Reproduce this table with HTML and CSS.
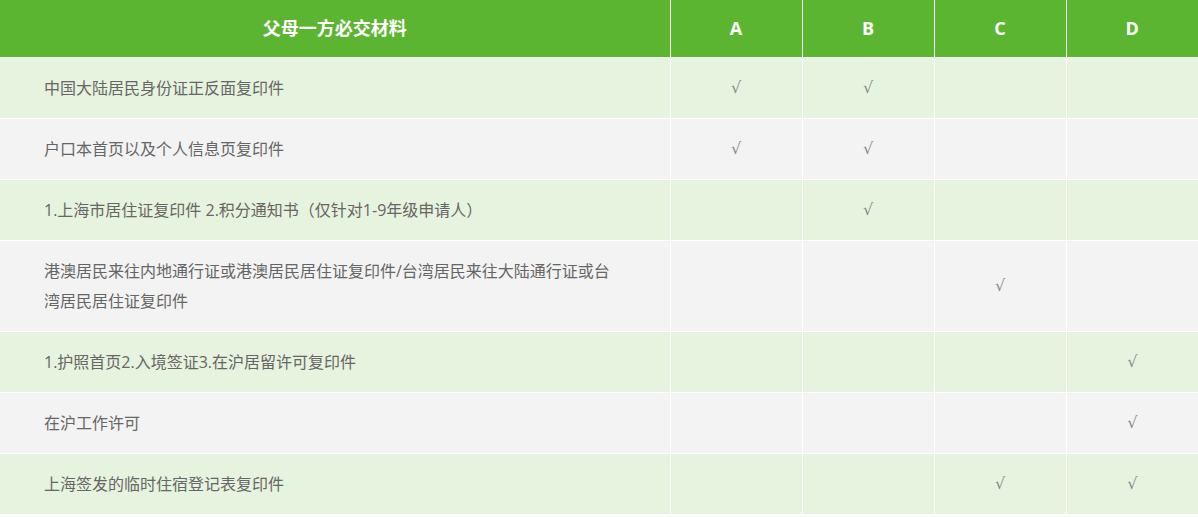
FILE: index.html
```html
<!DOCTYPE html>
<html lang="zh-CN">
<head>
<meta charset="utf-8">
<title>父母一方必交材料</title>
<link rel="stylesheet" href="styles.css">
</head>
<body>
<table class="materials">
  <colgroup>
    <col class="col-name">
    <col class="col-type">
    <col class="col-type">
    <col class="col-type">
    <col class="col-type">
  </colgroup>
  <thead>
    <tr>
      <th>父母一方必交材料</th>
      <th>A</th>
      <th>B</th>
      <th>C</th>
      <th>D</th>
    </tr>
  </thead>
  <tbody>
    <tr class="green">
      <td class="name">中国大陆居民身份证正反面复印件</td>
      <td class="mark">√</td><td class="mark">√</td><td class="mark"></td><td class="mark"></td>
    </tr>
    <tr class="gray">
      <td class="name">户口本首页以及个人信息页复印件</td>
      <td class="mark">√</td><td class="mark">√</td><td class="mark"></td><td class="mark"></td>
    </tr>
    <tr class="green">
      <td class="name">1.上海市居住证复印件 2.积分通知书（仅针对1-9年级申请人）</td>
      <td class="mark"></td><td class="mark">√</td><td class="mark"></td><td class="mark"></td>
    </tr>
    <tr class="gray">
      <td class="name">港澳居民来往内地通行证或港澳居民居住证复印件/台湾居民来往大陆通行证或台湾居民居住证复印件</td>
      <td class="mark"></td><td class="mark"></td><td class="mark">√</td><td class="mark"></td>
    </tr>
    <tr class="green">
      <td class="name">1.护照首页2.入境签证3.在沪居留许可复印件</td>
      <td class="mark"></td><td class="mark"></td><td class="mark"></td><td class="mark">√</td>
    </tr>
    <tr class="gray">
      <td class="name">在沪工作许可</td>
      <td class="mark"></td><td class="mark"></td><td class="mark"></td><td class="mark">√</td>
    </tr>
    <tr class="green">
      <td class="name">上海签发的临时住宿登记表复印件</td>
      <td class="mark"></td><td class="mark"></td><td class="mark">√</td><td class="mark">√</td>
    </tr>
  </tbody>
</table>
</body>
</html>
```
FILE: styles.css
```css
html, body {
  margin: 0;
  padding: 0;
  background: #ffffff;
}
body {
  font-family: "Open Sans", "Noto Sans CJK SC", sans-serif;
  color: #666666;
}
.materials {
  width: 1198px;
  border-collapse: collapse;
  table-layout: fixed;
}
.col-name { width: 670px; }
.col-type { width: 132px; }
.materials th {
  background: #5cb531;
  color: #ffffff;
  font-size: 18px;
  font-weight: bold;
  height: 57px;
  padding: 0;
  text-align: center;
  vertical-align: middle;
  border-right: 1px solid #ffffff;
  border-bottom: 1px solid #ffffff;
  box-sizing: border-box;
  line-height: 22px;
}
.materials td {
  font-size: 16px;
  line-height: 30px;
  padding: 15px 0;
  border-right: 1px solid #ffffff;
  border-bottom: 1px solid #ffffff;
  vertical-align: middle;
}
.materials tr > :last-child { border-right: none; }
.materials td.name {
  padding-left: 44px;
  padding-right: 52px;
}
.materials td.mark {
  text-align: center;
  font-family: "DejaVu Serif", "Liberation Serif", serif;
  font-size: 16px;
  color: #8a8a8a;
}
.green td { background: #e6f3df; }
.gray td { background: #f3f3f3; }
```
